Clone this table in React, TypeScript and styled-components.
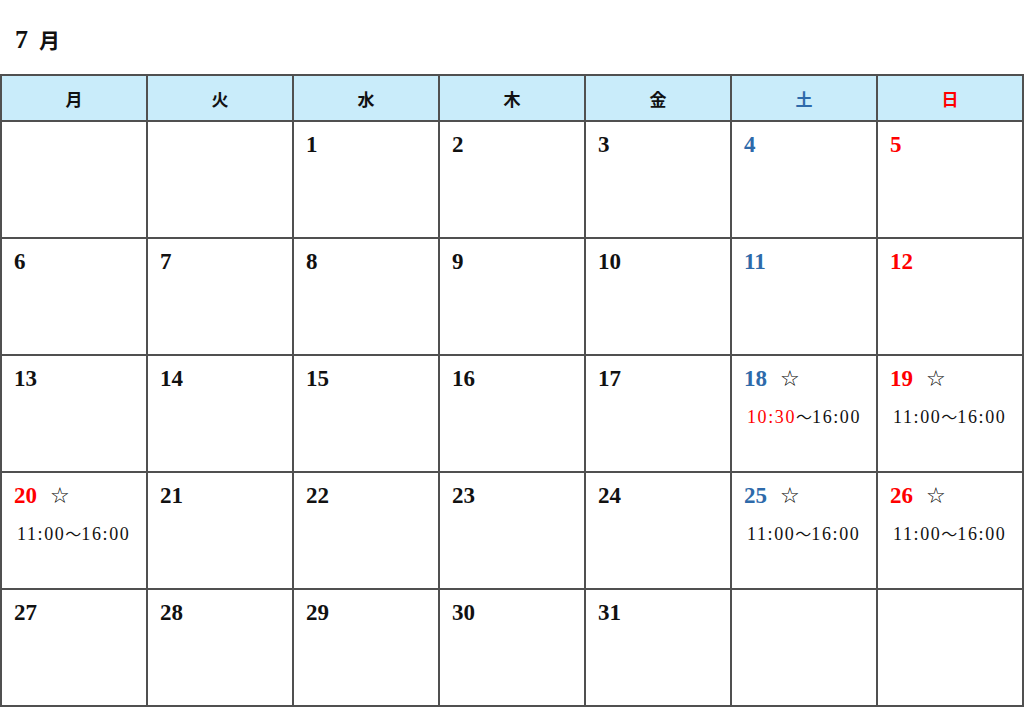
import React from 'react';
import styled, { createGlobalStyle } from 'styled-components';

type Tone = 'plain' | 'sat' | 'sun';

interface Day {
  date?: number;
  tone?: Tone;
  star?: boolean;
  open?: string;
  openRed?: boolean;
}

const GlobalStyle = createGlobalStyle`
  html, body {
    margin: 0;
    padding: 0;
    background: #ffffff;
  }
  body {
    font-family: 'Liberation Serif', 'Noto Sans CJK JP', serif;
    color: #111111;
  }
`;

const toneColor = (tone: Tone = 'plain') =>
  tone === 'sat' ? '#2e6aaa' : tone === 'sun' ? '#ff0000' : '#111111';

const weekdays: { label: string; tone: Tone }[] = [
  { label: '月', tone: 'plain' },
  { label: '火', tone: 'plain' },
  { label: '水', tone: 'plain' },
  { label: '木', tone: 'plain' },
  { label: '金', tone: 'plain' },
  { label: '土', tone: 'sat' },
  { label: '日', tone: 'sun' },
];

const week = (start: number): Day[] =>
  Array.from({ length: 7 }, (_, i) => ({
    date: start + i,
    tone: i === 5 ? 'sat' : i === 6 ? 'sun' : 'plain',
  }));

const buildDays = (): Day[] => {
  const days: Day[] = [
    {},
    {},
    { date: 1 },
    { date: 2 },
    { date: 3 },
    { date: 4, tone: 'sat' },
    { date: 5, tone: 'sun' },
    ...week(6),
    ...week(13),
    ...week(20),
    { date: 27 },
    { date: 28 },
    { date: 29 },
    { date: 30 },
    { date: 31 },
    {},
    {},
  ];

  const mark = (date: number, extra: Partial<Day>) => {
    const d = days.find((x) => x.date === date);
    if (d) Object.assign(d, extra);
  };

  // open days (☆) with their hours
  mark(18, { star: true, open: '10:30', openRed: true });
  mark(19, { star: true, open: '11:00' });
  mark(20, { star: true, open: '11:00', tone: 'sun' });
  mark(25, { star: true, open: '11:00' });
  mark(26, { star: true, open: '11:00' });
  return days;
};

export default function App() {
  const days = buildDays();

  return (
    <>
      <GlobalStyle />
      <Page>
        <Title>
          7<TitleMonth>月</TitleMonth>
        </Title>
        <Calendar>
          {weekdays.map((w) => (
            <HeadCell key={w.label} tone={w.tone}>
              {w.label}
            </HeadCell>
          ))}
          {days.map((d, i) => (
            <DayCell key={i}>
              {d.date && (
                <DayLine>
                  <DateNum tone={d.tone}>{d.date}</DateNum>
                  {d.star && <Star>☆</Star>}
                </DayLine>
              )}
              {d.open && (
                <Hours>
                  <OpenTime red={d.openRed}>{d.open}</OpenTime>
                  <Tilde>～</Tilde>16:00
                </Hours>
              )}
            </DayCell>
          ))}
        </Calendar>
      </Page>
    </>
  );
}

const Page = styled.div`
  width: 1024px;
  height: 707px;
  overflow: hidden;
`;

const Title = styled.div`
  height: 74px;
  box-sizing: border-box;
  padding: 24px 0 0 15px;
  font-size: 26px;
  font-weight: bold;
  line-height: 30px;
`;

const TitleMonth = styled.span`
  margin-left: 11px;
  font-family: 'Noto Sans CJK JP', sans-serif;
  font-size: 21px;
  font-weight: 700;
`;

const Calendar = styled.div`
  width: 1024px;
  box-sizing: border-box;
  display: grid;
  grid-template-columns: repeat(7, 146px);
  grid-template-rows: 46px repeat(5, 117px);
  border-left: 2px solid #505050;
  border-top: 2px solid #505050;
`;

const HeadCell = styled.div<{ tone: Tone }>`
  box-sizing: border-box;
  border-right: 2px solid #505050;
  border-bottom: 2px solid #505050;
  background: #c9ecfa;
  display: flex;
  align-items: center;
  justify-content: center;
  font-family: 'Noto Sans CJK JP', sans-serif;
  font-weight: 700;
  font-size: 17px;
  color: ${(p) => toneColor(p.tone)};
`;

const DayCell = styled.div`
  box-sizing: border-box;
  border-right: 2px solid #505050;
  border-bottom: 2px solid #505050;
  padding: 10px 0 0 12px;
  display: flex;
  flex-direction: column;
`;

const DayLine = styled.div`
  display: flex;
  align-items: center;
  height: 26px;
`;

const DateNum = styled.span<{ tone?: Tone }>`
  font-size: 23px;
  font-weight: bold;
  line-height: 26px;
  color: ${(p) => toneColor(p.tone)};
`;

const Star = styled.span`
  margin-left: 13px;
  font-family: 'DejaVu Sans', sans-serif;
  font-size: 22px;
  line-height: 26px;
  color: #000000;
`;

const Hours = styled.div`
  margin: 13px 0 0 3px;
  font-size: 18px;
  line-height: 22px;
  letter-spacing: 1.6px;
  white-space: nowrap;
  color: #111111;
`;

const OpenTime = styled.span<{ red?: boolean }>`
  color: ${(p) => (p.red ? '#ff0000' : '#111111')};
`;

const Tilde = styled.span`
  font-family: 'Noto Sans CJK JP', sans-serif;
  font-size: 16px;
  letter-spacing: 0;
`;
